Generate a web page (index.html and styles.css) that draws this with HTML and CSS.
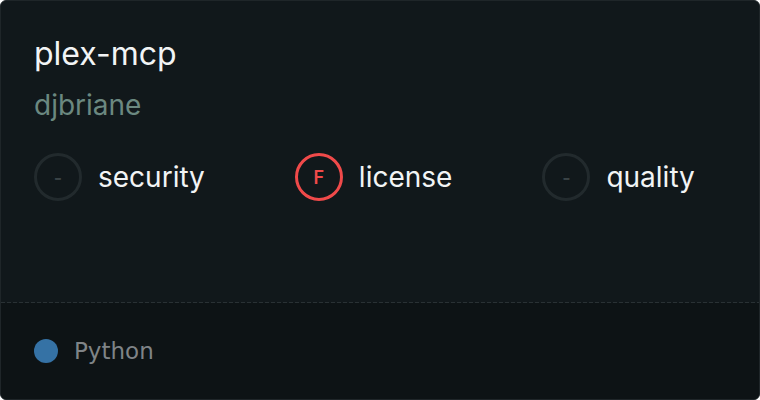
FILE: index.html
```html
<!DOCTYPE html>
<html lang="en">

<head>
    <meta charset="UTF-8">
    <meta name="viewport" content="width=device-width, initial-scale=1.0">
    <title>plex-mcp</title>
    <link rel="stylesheet" href="styles.css">
</head>

<body>
    <div class="card">
        <div class="card-body">
            <h1 class="repo-name">plex-mcp</h1>
            <div class="repo-owner">djbriane</div>
            <div class="scores">
                <div class="score">
                    <span class="grade grade-none">-</span>
                    <span class="score-label">security</span>
                </div>
                <div class="score">
                    <span class="grade grade-f">F</span>
                    <span class="score-label">license</span>
                </div>
                <div class="score">
                    <span class="grade grade-none">-</span>
                    <span class="score-label">quality</span>
                </div>
            </div>
        </div>
        <div class="divider"></div>
        <div class="card-footer">
            <span class="lang-dot"></span>
            <span class="lang-name">Python</span>
        </div>
    </div>
</body>

</html>
```

FILE: styles.css
```css
body {
    margin: 0;
    background-color: #ffffff;
    font-family: 'Inter', sans-serif;
}

.card {
    width: 760px;
    height: 400px;
    box-sizing: border-box;
    border: 1px solid #1f2629;
    border-radius: 6px;
    background-color: #11181b;
    overflow: hidden;
    display: flex;
    flex-direction: column;
}

.card-body {
    flex: 1;
    padding: 33px 33px 0 33px;
}

.divider {
    height: 1px;
    background-image: repeating-linear-gradient(to right, #293134 0 4px, transparent 4px 6px);
}

.repo-name {
    margin: 0;
    font-size: 32px;
    font-weight: 400;
    line-height: 40px;
    color: #f2f4f5;
}

.repo-owner {
    margin-top: 14px;
    font-size: 28px;
    line-height: 34px;
    color: #6b8880;
}

.scores {
    display: flex;
    gap: 90px;
    margin-top: 31px;
}

.score {
    display: flex;
    align-items: center;
    gap: 16px;
}

.grade {
    width: 48px;
    height: 48px;
    box-sizing: border-box;
    border-radius: 50%;
    border: 3px solid #222a2d;
    display: flex;
    align-items: center;
    justify-content: center;
    font-size: 18px;
    font-weight: 600;
}

.grade-none {
    color: #3a4346;
}

.grade-f {
    border-color: #f04a4a;
    color: #f04a4a;
}

.score-label {
    font-size: 28px;
    color: #f2f4f5;
}

.card-footer {
    height: 96px;
    box-sizing: border-box;
    padding: 0 33px;
    background-color: #0d1315;
    display: flex;
    align-items: center;
    gap: 16px;
}

.lang-dot {
    width: 24px;
    height: 24px;
    border-radius: 50%;
    background-color: #3572a5;
}

.lang-name {
    font-family: 'DejaVu Sans', sans-serif;
    font-size: 23px;
    color: #7f8487;
}
```
